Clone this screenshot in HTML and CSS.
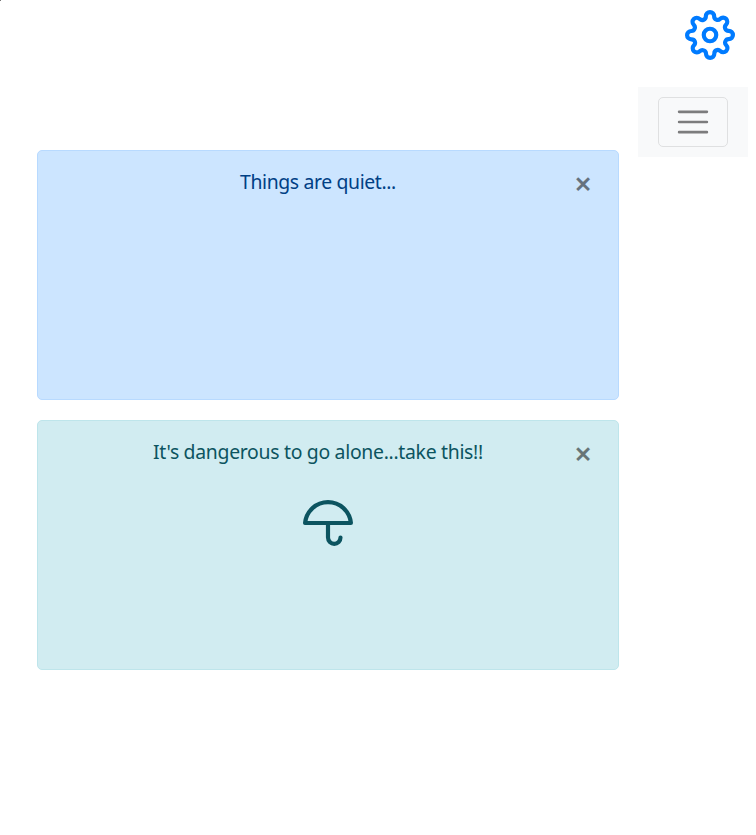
FILE: index.html
```html
<!DOCTYPE html>
<html lang="en">
<head>
<meta charset="utf-8">
<title>Notices</title>
<link rel="stylesheet" href="styles.css">
</head>
<body>
<i class="corner"></i>
<header class="top">
  <svg class="gear" viewBox="0 0 24 24" width="50" height="50">
    <circle cx="12" cy="12" r="3"/>
    <path d="M19.4 15a1.65 1.65 0 0 0 .33 1.82l.06.06a2 2 0 0 1 0 2.83 2 2 0 0 1-2.83 0l-.06-.06a1.65 1.65 0 0 0-1.82-.33 1.65 1.65 0 0 0-1 1.51V21a2 2 0 0 1-2 2 2 2 0 0 1-2-2v-.09A1.65 1.65 0 0 0 9 19.4a1.65 1.65 0 0 0-1.82.33l-.06.06a2 2 0 0 1-2.83 0 2 2 0 0 1 0-2.83l.06-.06a1.65 1.65 0 0 0 .33-1.82 1.65 1.65 0 0 0-1.51-1H3a2 2 0 0 1-2-2 2 2 0 0 1 2-2h.09A1.65 1.65 0 0 0 4.6 9a1.65 1.65 0 0 0-.33-1.82l-.06-.06a2 2 0 0 1 0-2.83 2 2 0 0 1 2.83 0l.06.06a1.65 1.65 0 0 0 1.82.33H9a1.65 1.65 0 0 0 1-1.51V3a2 2 0 0 1 2-2 2 2 0 0 1 2 2v.09a1.65 1.65 0 0 0 1 1.51 1.65 1.65 0 0 0 1.82-.33l.06-.06a2 2 0 0 1 2.83 0 2 2 0 0 1 0 2.83l-.06.06a1.65 1.65 0 0 0-.33 1.82V9a1.65 1.65 0 0 0 1.51 1H21a2 2 0 0 1 2 2 2 2 0 0 1-2 2h-.09a1.65 1.65 0 0 0-1.51 1z"/>
  </svg>
</header>
<div class="layout">
  <main class="alerts">
    <section class="alert primary">
      <p class="text quiet">Things are quiet...</p>
      <button class="close" aria-label="Close">×</button>
    </section>
    <section class="alert info">
      <p class="text">It's dangerous to go alone...take this!!</p>
      <button class="close" aria-label="Close">×</button>
      <svg class="umbrella" viewBox="0 0 24 24" width="50" height="50"><path d="M23 12a11.05 11.05 0 0 0-22 0zm-5 7a3 3 0 0 1-6 0v-7"/></svg>
    </section>
  </main>
  <nav class="navbar">
    <button class="toggler" aria-label="Menu">
      <svg viewBox="0 0 30 30" width="38" height="38"><path d="M4 7h22M4 15h22M4 23h22"/></svg>
    </button>
  </nav>
</div>
</body>
</html>
```

FILE: styles.css
```css
* { box-sizing: border-box; }
body {
  margin: 0;
  background: #fff;
  font-family: "Noto Sans", "Open Sans", sans-serif;
  font-size: 19.4px;
  line-height: 30px;
}
svg { display: block; fill: none; stroke-linecap: round; stroke-linejoin: round; }
.corner { position: absolute; top: 0; left: 0; width: 1px; height: 1px; background: #777; }
.top { height: 87px; padding: 10px 21px 0 0; display: flex; justify-content: flex-end; }
.gear { stroke: #007bff; stroke-width: 2; }
.layout { display: flex; align-items: flex-start; padding-left: 37px; }
.alerts { width: 582px; margin: 63px 19px 0 0; display: grid; gap: 20px; }
.alert {
  height: 250px;
  padding: 16px 20px;
  border: 1px solid;
  border-radius: 5px;
  display: grid;
  grid-template-columns: 1fr 30px;
  grid-template-rows: 30px 50px;
  row-gap: 31px;
}
.primary { color: #004085; background: #cce5ff; border-color: #b8daff; }
.info { color: #0c5460; background: #d1ecf1; border-color: #bee5eb; }
.text { margin: 0; padding-left: 10px; text-align: center; white-space: nowrap; letter-spacing: -.3px; }
.quiet { letter-spacing: -.37px; }
.close {
  padding: 1px 0 0;
  height: 31px;
  border: 0;
  background: none;
  color: #000;
  opacity: .5;
  font: 600 31px/30px "Noto Sans", sans-serif;
}
.umbrella { grid-column: 1 / -1; justify-self: center; stroke: #0c5460; stroke-width: 2; }
.navbar { width: 110px; height: 70px; padding: 10px 20px; background: #f8f9fa; }
.toggler {
  width: 70px;
  height: 50px;
  padding: 0;
  border: 1px solid #dfe0e1;
  border-radius: 5px;
  background: none;
  display: grid;
  place-items: center;
}
.toggler svg { stroke: #7c7c7d; stroke-width: 2; }
```
